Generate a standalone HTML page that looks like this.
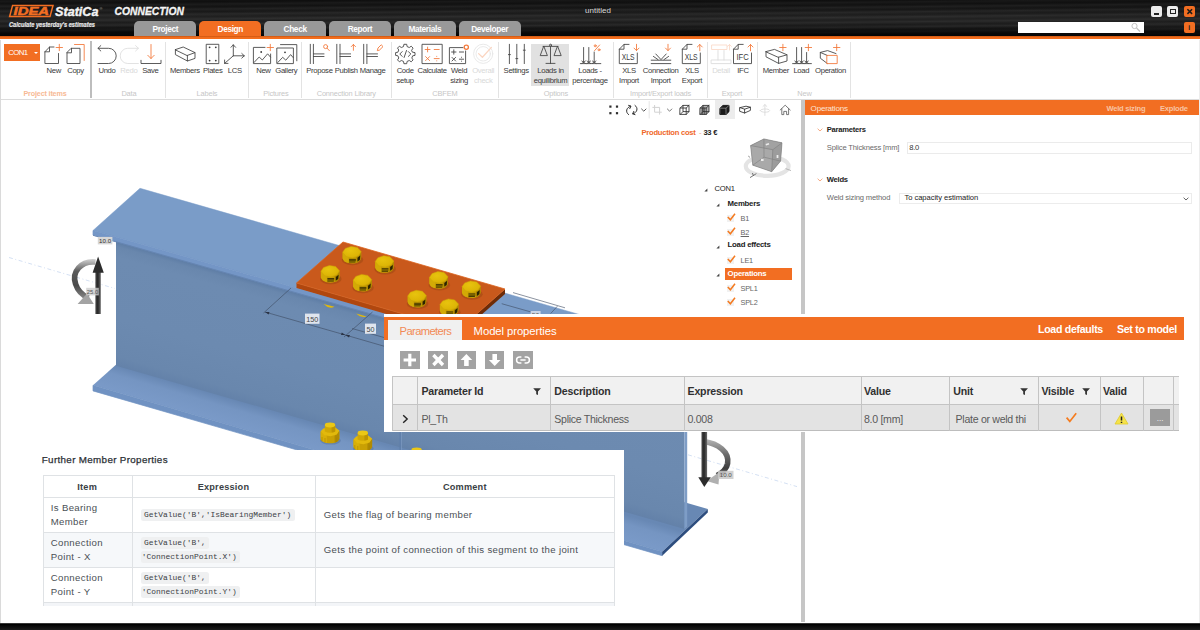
<!DOCTYPE html>
<html lang="en">
<head>
<meta charset="utf-8">
<title>IDEA StatiCa Connection - untitled</title>
<style>
*{box-sizing:border-box;margin:0;padding:0}
html,body{width:1200px;height:630px;overflow:hidden;background:#fff}
body{font-family:"Liberation Sans",sans-serif;color:#333;position:relative}
.abs{position:absolute}
#app{position:absolute;left:0;top:0;width:1200px;height:630px;overflow:hidden;background:#fff}
/* title bar */
#titlebar{position:absolute;left:0;top:0;width:1200px;height:36px;background:#1b1b1b;
 background-image:linear-gradient(180deg,rgba(0,0,0,.35) 0%,rgba(0,0,0,.05) 22%,rgba(255,255,255,.05) 50%,rgba(255,255,255,.02) 72%,rgba(0,0,0,.55) 88%,rgba(0,0,0,.85) 100%),repeating-linear-gradient(179.4deg,rgba(255,255,255,0) 0px,rgba(255,255,255,.04) 1.2px,rgba(255,255,255,0) 2.6px,rgba(0,0,0,.22) 3.8px,rgba(255,255,255,0) 5px);}
#oline{position:absolute;left:0;top:35.5px;width:1200px;height:4.2px;background:linear-gradient(180deg,#b84c0c 0,#ee6a1c 22%,#f56f1e 70%,#f9a576 92%,#fff 100%)}
.tab{position:absolute;top:21.3px;height:15.5px;width:62.2px;background:#999;border-radius:5px 5px 0 0;color:#fff;font-weight:bold;font-size:8.3px;text-align:center;line-height:16.6px;letter-spacing:-.36px}
.tab.on{background:#f26e22}
#ribbon{position:absolute;left:0;top:39px;width:1200px;height:61px;background:#fff;border-bottom:1px solid #dcdcdc}
.rl{position:absolute;top:66px;font-size:7.7px;line-height:10px;color:#3a3a3a;text-align:center;width:60px;margin-left:-30px;letter-spacing:-.32px;white-space:nowrap}
.rl.dis{color:#d9d9d9}
.gl{position:absolute;top:88.8px;font-size:7.4px;line-height:10px;color:#c6c6c6;text-align:center;width:90px;margin-left:-45px;letter-spacing:-.16px;white-space:nowrap}
.sep{position:absolute;top:41.5px;height:56px;width:1px;background:#e3e3e3}
/* bottom */
#bottombar{position:absolute;left:0;top:623.2px;width:1200px;height:6.8px;background:linear-gradient(180deg,#555 0,#000 1.4px,#0a0a0a 3px,#1d1d1d 100%)}
#viewport{position:absolute;left:0;top:100px;width:801px;height:522px;background:#fff;overflow:hidden}
#vsplit{position:absolute;left:801.2px;top:100px;width:3.8px;height:522px;background:#c6c6c6}
#rpanel{position:absolute;left:805px;top:100px;width:395px;height:522px;background:#fff}

#pp{position:absolute;left:384px;top:314px;width:800px;height:117.6px;background:#fff;overflow:hidden}
#pp .t{position:absolute;white-space:nowrap;font-size:10.4px;line-height:14px;letter-spacing:-.3px}
#pp .h{font-weight:bold;color:#303030;top:69.7px;font-size:10.6px;letter-spacing:-.18px}
#pp .c{color:#5a5a5a;top:97.5px;font-size:10.6px}
#pp .vl{position:absolute;top:61.6px;width:1px;height:55px;background:#c4c4c4}
#pp .btn{position:absolute;top:36.7px;width:19.6px;height:18px;background:#a3a3a3}

#fp{position:absolute;left:23px;top:451.3px;width:600.6px;height:160px;background:#fff;overflow:hidden}
#fp .t{position:absolute;white-space:nowrap;font-size:9.6px;line-height:14px;color:#4a4f55;letter-spacing:.36px}
#fp .hd{font-weight:bold;color:#3a3f45;text-align:center;top:28.4px;font-size:9.2px;letter-spacing:.2px}
#fp .hl{position:absolute;left:19.7px;width:571.7px;height:1px;background:#dfe2e5}
#fp .vl{position:absolute;top:24px;width:1px;height:130.4px;background:#dfe2e5}
#fp .code{position:absolute;white-space:nowrap;font-family:"Liberation Mono",monospace;font-size:7.93px;line-height:10px;color:#3c4146;background:#eff0f1;border-radius:2.5px;padding:1.2px 3.4px 0.8px 3.4px;letter-spacing:0}
</style>
</head>
<body>
<div id="app">
<div id="titlebar">
<svg class="abs" style="left:0;top:0" width="200" height="36" viewBox="0 0 200 36">
 <polygon points="12.6,5.4 53,5.4 50,16.6 9.6,16.6" fill="none" stroke="#f26e22" stroke-width="1.5"/>
 <text x="13.6" y="14.9" font-family="Liberation Sans, sans-serif" font-weight="bold" font-style="italic" font-size="10.6" fill="#f26e22" stroke="#f26e22" stroke-width="0.5" textLength="35.5" lengthAdjust="spacingAndGlyphs">IDEA</text>
 <text x="55" y="15.6" font-family="Liberation Sans, sans-serif" font-weight="bold" font-style="italic" font-size="12.6" fill="#f4f4f4" stroke="#f4f4f4" stroke-width="0.35" textLength="43.5" lengthAdjust="spacingAndGlyphs">StatiCa</text>
 <text x="99.5" y="9.5" font-family="Liberation Sans, sans-serif" font-size="4" fill="#aaa">®</text>
 <text x="114.5" y="15.2" font-family="Liberation Sans, sans-serif" font-weight="bold" font-style="italic" font-size="11" fill="#f4f4f4" stroke="#f4f4f4" stroke-width="0.3" textLength="69.5" lengthAdjust="spacingAndGlyphs">CONNECTION</text>
 <text x="9" y="27.3" font-family="Liberation Sans, sans-serif" font-weight="bold" font-style="italic" font-size="6.3" fill="#e6e6e6" stroke="#e6e6e6" stroke-width="0.2" textLength="86" lengthAdjust="spacingAndGlyphs">Calculate yesterday's estimates</text>
</svg>
<div class="tab" style="left:134.3px">Project</div>
<div class="tab on" style="left:199.2px">Design</div>
<div class="tab" style="left:264px">Check</div>
<div class="tab" style="left:328.9px">Report</div>
<div class="tab" style="left:393.7px">Materials</div>
<div class="tab" style="left:458.5px">Developer</div>
<div class="abs" style="left:568px;top:6px;width:60px;text-align:center;font-size:8px;color:#d8d8d8;line-height:10px">untitled</div>
<div class="abs" style="left:1017.5px;top:21.5px;width:126px;height:11.5px;background:#fff"></div>
<svg class="abs" style="left:1128px;top:21px" width="16" height="14" viewBox="0 0 16 14"><circle cx="6.5" cy="5" r="2.6" fill="none" stroke="#c2c2c2" stroke-width="1"/><path d="M8.5,7 L12,10.5" stroke="#c2c2c2" stroke-width="1.3"/></svg>
<div class="abs" style="left:1150.5px;top:6px;width:11.5px;height:11px;background:#ececec;border-radius:2px"></div>
<div class="abs" style="left:1153.5px;top:13px;width:5.5px;height:1.5px;background:#222"></div>
<div class="abs" style="left:1166.5px;top:6px;width:11.5px;height:11px;background:#ececec;border-radius:2px"></div>
<div class="abs" style="left:1169.5px;top:8.5px;width:6px;height:5.5px;border:1px solid #222;border-top-width:1.8px"></div>
<div class="abs" style="left:1183.5px;top:6px;width:11.5px;height:11px;background:#f26e22;border-radius:2px"></div>
<svg class="abs" style="left:1183.5px;top:6px" width="11.5" height="11" viewBox="0 0 11.5 11"><path d="M3.4,3.2 L8.1,7.9 M8.1,3.2 L3.4,7.9" stroke="#1a1a1a" stroke-width="1.5"/></svg>
<div class="abs" style="left:1183.5px;top:21.5px;width:11.5px;height:11px;background:#f26e22;border-radius:2px;color:#222;font-size:7px;font-weight:bold;text-align:center;line-height:11px">i</div>
</div>
<div id="oline"></div>
<div id="ribbon"></div>
<div class="abs" style="left:531px;top:43.7px;width:38.3px;height:42.8px;background:#e1e1e1"></div>
<div class="abs" style="left:4.2px;top:43.7px;width:35.5px;height:17.7px;background:#f26e22;color:#fff;font-size:7.8px;line-height:17.5px;padding-left:4px;letter-spacing:-.55px">CON1</div>
<div class="abs" style="left:33.5px;top:51.8px;width:0;height:0;border-left:2px solid transparent;border-right:2px solid transparent;border-top:2.4px solid #fff"></div>
<div class="abs" style="left:90px;top:41px;width:1.6px;height:57px;background:#bdbdbd"></div>
<div class="sep" style="left:165.2px"></div>
<div class="sep" style="left:248.3px"></div>
<div class="sep" style="left:301.2px"></div>
<div class="sep" style="left:390.6px"></div>
<div class="sep" style="left:498.4px"></div>
<div class="sep" style="left:612.7px"></div>
<div class="sep" style="left:706.5px"></div>
<div class="sep" style="left:756.7px"></div>
<div class="sep" style="left:849.8px"></div>
<div class="rl" style="left:53.8px">New</div>
<div class="rl" style="left:75.5px">Copy</div>
<div class="rl" style="left:107px">Undo</div>
<div class="rl dis" style="left:128.9px">Redo</div>
<div class="rl" style="left:150.4px">Save</div>
<div class="rl" style="left:184.8px">Members</div>
<div class="rl" style="left:212.7px">Plates</div>
<div class="rl" style="left:234.8px">LCS</div>
<div class="rl" style="left:263.4px">New</div>
<div class="rl" style="left:286.3px">Gallery</div>
<div class="rl" style="left:319.4px">Propose</div>
<div class="rl" style="left:346.3px">Publish</div>
<div class="rl" style="left:372.6px">Manage</div>
<div class="rl" style="left:405.2px">Code<br>setup</div>
<div class="rl" style="left:432.1px">Calculate</div>
<div class="rl" style="left:459.1px">Weld<br>sizing</div>
<div class="rl dis" style="left:483.2px">Overall<br>check</div>
<div class="rl" style="left:516.2px">Settings</div>
<div class="rl" style="left:550.5px">Loads in<br>equilibrium</div>
<div class="rl" style="left:590px">Loads -<br>percentage</div>
<div class="rl" style="left:629px">XLS<br>Import</div>
<div class="rl" style="left:660.6px">Connection<br>Import</div>
<div class="rl" style="left:692px">XLS<br>Export</div>
<div class="rl dis" style="left:721px">Detail</div>
<div class="rl" style="left:743px">IFC</div>
<div class="rl" style="left:775.9px">Member</div>
<div class="rl" style="left:801.3px">Load</div>
<div class="rl" style="left:830.5px">Operation</div>
<div class="gl" style="left:45px;color:#f7b994;font-weight:bold;font-size:7.2px">Project items</div>
<div class="gl" style="left:128.9px">Data</div>
<div class="gl" style="left:207px">Labels</div>
<div class="gl" style="left:275.9px">Pictures</div>
<div class="gl" style="left:346.3px">Connection Library</div>
<div class="gl" style="left:444.9px">CBFEM</div>
<div class="gl" style="left:555.9px">Options</div>
<div class="gl" style="left:660.6px">Import/Export loads</div>
<div class="gl" style="left:732px">Export</div>
<div class="gl" style="left:804.5px">New</div>
<svg class="abs" id="ricons" style="left:0;top:0;pointer-events:none" width="1200" height="110" viewBox="0 0 1200 110" fill="none" stroke="#464646" stroke-width="0.88" stroke-linecap="round" stroke-linejoin="round">
<!-- New -->
<path d="M54,47 H49.5 L44.9,51.8 V63.5 H58.5 V53.5 M49.5,47 V51.8 H44.9"/>
<path d="M59.3,44.3 V50.7 M56.1,47.5 H62.5" stroke="#f47a3c"/>
<!-- Copy -->
<path d="M71.5,48.3 H80 V63.5 H67 V52.8 Z M71.5,48.3 V52.8 H67"/>
<path d="M74.5,44.5 H84.2 V60.5" stroke="#f47a3c"/>
<!-- Undo -->
<path d="M98,48.3 H108.6 A7.6,7.6 0 0 1 108.6,63.5 H98 M100.8,45.6 L98,48.3 L100.8,51"/>
<!-- Redo -->
<path d="M138.4,48.3 H127.8 A7.6,7.6 0 0 0 127.8,63.5 H138.4 M135.6,45.6 L138.4,48.3 L135.6,51" stroke="#dedede"/>
<!-- Save -->
<path d="M141,60.3 V63.5 H161 V60.3"/>
<path d="M151,44.5 V58.5 M147.8,55.3 L151,58.5 L154.2,55.3" stroke="#f47a3c"/>
<!-- Members -->
<path d="M175.4,49.6 L183.2,47 L195,52.6 L187.4,55.4 Z M175.4,49.6 V54.6 L187.4,61 V55.4 M187.4,61 L195,58.4 V52.6"/>
<!-- Plates -->
<rect x="206.6" y="44.3" width="12.2" height="19.3"/>
<g fill="#3c3c3c" stroke="none"><circle cx="209.6" cy="47.3" r="0.9"/><circle cx="215.8" cy="47.3" r="0.9"/><circle cx="209.6" cy="60.6" r="0.9"/><circle cx="215.8" cy="60.6" r="0.9"/></g>
<!-- LCS -->
<path d="M233.3,55.8 V44.8 M231,47.3 L233.3,44.8 L235.6,47.3 M233.3,55.8 H244.3 M241.8,53.5 L244.3,55.8 L241.8,58.1 M233.3,55.8 L224.6,63.4 M224.6,60 V63.4 H228"/>
<!-- Picture new -->
<path d="M265,47.4 H253.4 V63.6 H270.6 V54"/>
<path d="M254,62.5 L259.2,57 L262.3,60 L267.6,53.8 L270.4,57"/>
<circle cx="261.2" cy="52" r="0.9" fill="#3c3c3c" stroke="none"/>
<path d="M270.3,44.3 V50.7 M267.1,47.5 H273.5" stroke="#f47a3c"/>
<!-- Gallery -->
<rect x="277.2" y="48" width="16.2" height="15.6"/>
<path d="M280.5,44.6 H296.8 V60.8"/>
<path d="M277.8,62.5 L282.7,57.3 L285.8,60.2 L290.6,54.6 L293.2,57.6"/>
<circle cx="285" cy="52.3" r="0.9" fill="#3c3c3c" stroke="none"/>
<!-- Propose -->
<path d="M310.3,44.3 V63.6 M313.4,44.3 V63.6 M313.4,53.9 H324 M313.4,56.5 H324"/>
<circle cx="325.6" cy="46.6" r="2" stroke="#f47a3c"/><path d="M327.2,48.3 L329.3,50.6" stroke="#f47a3c"/>
<!-- Publish -->
<path d="M336.8,44.3 V63.6 M340,44.3 V63.6 M340,53.9 H350.6 M340,56.5 H350.6"/>
<path d="M353.4,50.3 V44.5 M351.3,46.6 L353.4,44.5 L355.5,46.6" stroke="#f47a3c"/>
<!-- Manage -->
<path d="M363.7,44.3 V63.6 M366.9,44.3 V63.6 M366.9,53.9 H377.5 M366.9,56.5 H377.5"/>
<path d="M377.4,50.3 L378,48 L381.2,44.8 L383,46.6 L379.8,49.8 Z" stroke="#f47a3c" stroke-width="0.9"/>
<!-- Code setup -->
<path d="M412.7,52.2 L415.0,52.6 L415.0,55.4 L412.7,55.8 L411.8,58.0 L413.1,59.9 L411.2,61.8 L409.3,60.5 L407.1,61.4 L406.7,63.7 L403.9,63.7 L403.5,61.4 L401.3,60.5 L399.4,61.8 L397.5,59.9 L398.8,58.0 L397.9,55.8 L395.6,55.4 L395.6,52.6 L397.9,52.2 L398.8,50.0 L397.5,48.1 L399.4,46.2 L401.3,47.5 L403.5,46.6 L403.9,44.3 L406.7,44.3 L407.1,46.6 L409.3,47.5 L411.2,46.2 L413.1,48.1 L411.8,50.0Z" stroke-width="0.9"/>
<path d="M402.2,51.6 L399.8,54 L402.2,56.4 M408.4,51.6 L410.8,54 L408.4,56.4 M406.5,50.5 L404.1,57.5" stroke-width="0.9"/>
<!-- Calculate -->
<rect x="422.4" y="44.3" width="19.8" height="19.3"/>
<path d="M425.2,49.5 H430 M427.6,47.1 V51.9 M434.2,49.5 H439.2 M425.6,56.6 L429.6,60.6 M429.6,56.6 L425.6,60.6 M434.2,58.6 H439.2 M436.7,56.3 V56.4 M436.7,60.8 V60.9" stroke="#f47a3c"/>
<!-- Weld sizing -->
<path d="M463,47.6 H449.4 V63.6 H465.6 V51"/>
<path d="M451.6,52 H456 M453.8,49.8 V54.2 M459.4,52 H463.6 M452,57.4 L455.6,61 M455.6,57.4 L452,61 M459.4,59.2 H463.6 M461.5,57.2 V57.3 M461.5,61.1 V61.2" stroke-width="0.9"/>
<circle cx="466.3" cy="47.3" r="2.1" stroke="#f47a3c" stroke-width="1.3"/>
<!-- Overall check -->
<circle cx="483.2" cy="53.8" r="9.6" stroke="#e6e6e6"/><circle cx="483.2" cy="53.8" r="7.2" stroke="#e6e6e6"/>
<path d="M478.6,53.6 L482.4,57.2 L491.4,47.4" stroke="#fbd6c2" stroke-width="1.3"/>
<!-- Settings -->
<path d="M509.4,44.3 V63.6 M516.8,44.3 V63.6 M524.3,44.3 V63.6 M508.4,54.6 H510.4 M515.8,58.6 H517.8 M523.3,50.2 H525.3"/>
<!-- Loads in equilibrium -->
<path d="M550.5,45.2 V63.4 M546,63.4 H555 M543,46.4 H558 M543.6,46.4 L540.2,55.6 H547 Z M557.4,46.4 L554,55.6 H560.8 Z"/>
<circle cx="550.5" cy="45.2" r="1" fill="#e1e1e1"/>
<!-- Loads percentage -->
<path d="M583.6,47.5 V62.4 M588.8,47.5 V62.4 M594.2,52 V62.4 M580.3,63.6 H600.8"/>
<path d="M581.8,61 L585.4,63.4 M585.4,61 L581.8,63.4 M587,61 L590.6,63.4 M590.6,61 L587,63.4 M592.4,61 L596,63.4 M596,61 L592.4,63.4" stroke-width="0.8"/>
<path d="M599.6,45 L594.6,50.6" stroke="#f47a3c"/><circle cx="595.2" cy="45.8" r="1" stroke="#f47a3c" stroke-width="0.9"/><circle cx="599" cy="49.8" r="1" stroke="#f47a3c" stroke-width="0.9"/>
<!-- XLS import -->
<path d="M629,44.4 H624 L619.3,49.2 V63.6 H637.3 V53 M624,44.4 V49.2 H619.3"/>
<path d="M636.5,44.3 V50.6 M634,48.1 L636.5,50.6 L639,48.1" stroke="#f47a3c"/>
<!-- Connection import -->
<path d="M651.2,60.2 H670.8 M651.2,63.6 H670.8 M655.8,54 L661,59.6 L666.2,54 M653.4,56.4 L658,59.6 M668.6,56.4 L664,59.6" stroke-width="0.9"/>
<path d="M668,44.3 V50.6 M665.5,48.1 L668,50.6 L670.5,48.1" stroke="#f47a3c"/>
<!-- XLS export -->
<path d="M692,44.4 H687 L682.3,49.2 V63.6 H700.3 V53 M687,44.4 V49.2 H682.3"/>
<path d="M699.8,50.8 V44.5 M697.3,47 L699.8,44.5 L702.3,47" stroke="#f47a3c"/>
<!-- Detail (disabled) -->
<path d="M711.5,60 H731 V63.6 H711.5 Z M718,50.5 V60 M724,50.5 V60" stroke="#dcdcdc"/>
<path d="M712,45 H727 V49.5 H712 Z M729.5,50 V44.5 M727.6,46.4 L729.5,44.5 L731.4,46.4" stroke="#fad9c8"/>
<!-- IFC -->
<path d="M743.2,44.4 H738.2 L733.5,49.2 V63.6 H751.5 V53 M738.2,44.4 V49.2 H733.5"/>
<path d="M750.5,50.8 V44.5 M748,47 L750.5,44.5 L753,47" stroke="#f47a3c"/>
<!-- Member new -->
<path d="M766,51.6 L774.5,49.4 L787,54.8 L778.6,57.2 Z M766,51.6 V56.8 L778.6,63.4 V57.2 M778.6,63.4 L787,61 V54.8"/>
<path d="M782.9,44.3 V50.7 M779.7,47.5 H786.1" stroke="#f47a3c"/>
<!-- Load new -->
<path d="M796.6,47.5 V62.4 M801.6,47.5 V62.4 M806.6,52.5 V62.4 M792.6,63.6 H811.4"/>
<path d="M794.8,61 L798.4,63.4 M798.4,61 L794.8,63.4 M799.8,61 L803.4,63.4 M803.4,61 L799.8,63.4 M804.8,61 L808.4,63.4 M808.4,61 L804.8,63.4" stroke-width="0.8"/>
<path d="M808.4,44.3 V50.7 M805.2,47.5 H811.6" stroke="#f47a3c"/>
<!-- Operation new -->
<path d="M827.2,55.4 L820.3,52.4 L827.6,50.6 L836,53.6 M820.3,52.4 V58.2 L827.2,63.4"/>
<path d="M827.2,55.4 H837.2 V63.6 H827.2 Z" stroke="#f47a3c"/>
<path d="M836.7,44.3 V50.7 M833.5,47.5 H839.9" stroke="#f47a3c"/>
<g stroke="none" fill="#3c3c3c" font-family="Liberation Sans, sans-serif" font-size="8.6">
<text x="621.8" y="60" textLength="12.8" lengthAdjust="spacingAndGlyphs">XLS</text>
<text x="684.8" y="60" textLength="12.8" lengthAdjust="spacingAndGlyphs">XLS</text>
<text x="736.4" y="60" textLength="12.4" lengthAdjust="spacingAndGlyphs">IFC</text>
</g>
</svg>
<div id="viewport">
<svg class="abs" style="left:0;top:0" width="803" height="522" viewBox="0 100 803 522">
<defs>
<linearGradient id="gweb" gradientUnits="userSpaceOnUse" x1="116" y1="242" x2="82.6" y2="359"><stop offset="0" stop-color="#5f7ea6"/><stop offset="0.035" stop-color="#6987ad"/><stop offset="0.12" stop-color="#6d8bb1"/><stop offset="0.6" stop-color="#6c8ab0"/><stop offset="0.9" stop-color="#6987ad"/><stop offset="1" stop-color="#6280a8"/></linearGradient>
<linearGradient id="gbf" gradientUnits="userSpaceOnUse" x1="116" y1="365.7" x2="108.9" y2="390"><stop offset="0" stop-color="#6888b4"/><stop offset="0.35" stop-color="#7595c2"/><stop offset="1" stop-color="#7a9ac8"/></linearGradient>
<radialGradient id="gnut" cx="0.4" cy="0.35" r="0.75"><stop offset="0" stop-color="#e8c30e"/><stop offset="0.7" stop-color="#ddb506"/><stop offset="1" stop-color="#cca303"/></radialGradient>
<linearGradient id="gcl" gradientUnits="userSpaceOnUse" x1="0" y1="259" x2="0" y2="300"><stop offset="0" stop-color="#d2d2d2"/><stop offset="0.3" stop-color="#5a5a5a"/><stop offset="0.65" stop-color="#4a4a4a"/><stop offset="1" stop-color="#8e8e8e"/></linearGradient>
<linearGradient id="gcr" gradientUnits="userSpaceOnUse" x1="0" y1="439" x2="0" y2="478"><stop offset="0" stop-color="#b5b5b5"/><stop offset="0.4" stop-color="#6a6a6a"/><stop offset="0.75" stop-color="#3e3e3e"/><stop offset="1" stop-color="#6a6a6a"/></linearGradient>
<linearGradient id="gsh" gradientUnits="userSpaceOnUse" x1="95.4" y1="0" x2="100.8" y2="0"><stop offset="0" stop-color="#4a4a4a"/><stop offset="0.45" stop-color="#262626"/><stop offset="1" stop-color="#6a6a6a"/></linearGradient>
<linearGradient id="gsh2" gradientUnits="userSpaceOnUse" x1="701.5" y1="0" x2="707.1" y2="0"><stop offset="0" stop-color="#4a4a4a"/><stop offset="0.45" stop-color="#262626"/><stop offset="1" stop-color="#6a6a6a"/></linearGradient>
<g id="nut2">
 <ellipse cx="0.5" cy="7.6" rx="10.4" ry="4" fill="#4f6f9c" opacity=".45"/>
 <path d="M-9.3,-1.6 V6 Q-8.4,8.8 -3.2,10 Q0.6,10.8 4.6,9.8 Q9,8.4 9.3,5.6 V-2 Z" fill="#c9a004"/>
 <path d="M-9.3,-1.6 V6 Q-8.4,8.8 -3.2,10 V3 Z" fill="#d8af08"/>
 <path d="M4.6,3 V9.8 Q9,8.4 9.3,5.6 V-2 Z" fill="#b18a02"/>
 <polygon points="-9.3,-1.8 -6.6,-4.6 -0.8,-6 5.4,-5.4 9.3,-2.4 6.8,1.4 0.6,3.2 -5.6,2.2" fill="#e2b90c"/>
 <path d="M-5.2,-8 V-1.4 Q0,1 5.2,-1.4 V-8 Z" fill="#d1a806"/>
 <path d="M1.6,-0.4 Q4,-0.6 5.2,-1.4 V-8 H1.6 Z" fill="#bd9503"/>
 <ellipse cx="0" cy="-8" rx="5.2" ry="2.4" fill="#ebc716"/>
 <path d="M-8,4 V8 M-5,5 V9.4 M6.6,4.4 V9" stroke="#a88402" stroke-width="0.6"/>
</g>
<g id="bolt">
 <ellipse cx="0.6" cy="4.8" rx="10.8" ry="5.4" fill="#9a4710" opacity=".5"/>
 <path d="M-9.3,-2.6 V3.2 Q-8.6,6.6 -3.4,8.1 Q0.6,9 4.4,8 Q9,6.4 9.3,2.6 V-3 Z" fill="#c49c03"/>
 <path d="M-9.3,-2.6 V3.2 Q-8.6,6.6 -3.4,8.1 V2 Z" fill="#d3aa06"/>
 <path d="M4.6,2.2 V8 Q9,6.4 9.3,2.6 V-3 Z" fill="#ad8602"/>
 <polygon points="-9.3,-2.8 -6.6,-6.6 -0.8,-8.6 5.4,-7.6 9.3,-3.4 6.8,0.8 0.6,3 -5.6,1.6" fill="url(#gnut)" stroke="#cfa705" stroke-width="0.5"/>
 <path d="M-2.8,4.4 H4 M-2.8,5.7 H4 M-2.8,7 H3.6" stroke="#3a2f00" stroke-width="0.9"/>
 <path d="M5.6,2.8 L8.4,0.6 L8,4.8 L5.6,6.4Z" fill="#2a2200"/>
</g>
</defs>
<!-- faint axis -->
<path d="M9,257.5 L115,288.5" stroke="#cfdcf2" stroke-width="0.9" stroke-dasharray="4,2.5,1,2.5"/>
<path d="M688,454.8 L797,486.6" stroke="#cfdcf2" stroke-width="0.9" stroke-dasharray="4,2.5,1,2.5"/>
<!-- bottom flange -->
<polygon points="93.0,385.3 139.5,343.8 707.8,509.0 662.2,551.7" fill="url(#gbf)"/>
<polygon points="93.0,385.3 662.2,551.7 662.2,555.7 93.0,390.9" fill="#7092c2" stroke="#7092c2" stroke-width="0.7"/>
<polygon points="662.2,551.7 707.8,509.0 707.8,512.6 662.2,555.7" fill="#2d4d7e"/>
<!-- web -->
<polygon points="116.0,238.0 684.4,398.9 684.4,529.0 116.0,365.7" fill="url(#gweb)"/>
<polygon points="684.4,402.4 687.2,400.0 687.2,526.6 684.4,529.0" fill="#7e9dc6"/>
<path d="M400.2,300 V452" stroke="#5f7fab" stroke-width="1.6" opacity=".8"/><path d="M401.6,300 V452" stroke="#86a3cb" stroke-width="0.8" opacity=".7"/>
<!-- top flange -->
<polygon points="93.0,230.5 140.0,188.3 709.5,351.9 662.5,391.7" fill="#7a9cc8" stroke="#7a9cc8" stroke-width="0.5"/>
<polygon points="93.0,230.5 662.5,391.7 662.5,396.3 93.0,235.1" fill="#7496c6" stroke="#7496c6" stroke-width="0.7"/>
<path d="M93,235.3 L662.5,396.5" stroke="#6483b0" stroke-width="0.9"/>
<!-- dims -->
<g stroke="#3d4a60" stroke-width="0.6" fill="none">
<path d="M291,288 L263.5,313 M265,312 L345.4,335 M372.5,312 L344,337 M345.4,335 L392,348.5 M352,328.5 L400,342"/>
<path d="M513,292.6 L565,307.8 M557.4,306.2 L550.6,313.6 M501.7,303.7 L536,313.4"/>
</g>
<g fill="#2a3345"><polygon points="265,312 269.5,311.9 268.6,314.4"/><polygon points="345.4,335 341,335 341.8,332.6"/><polygon points="345.4,335 349.9,334.9 349,337.4"/></g>
<rect x="305" y="313.6" width="14.5" height="10.2" fill="#e9edf3" opacity=".92"/><text x="312.3" y="321.6" font-size="7.2" font-family="Liberation Sans, sans-serif" fill="#444" text-anchor="middle">150</text>
<rect x="365" y="323.6" width="11" height="10.2" fill="#e9edf3" opacity=".92"/><text x="370.5" y="331.6" font-size="7.2" font-family="Liberation Sans, sans-serif" fill="#444" text-anchor="middle">50</text>
<rect x="530.6" y="311" width="10" height="9" fill="#d3dcea" opacity=".9"/><text x="535.6" y="318" font-size="7" font-family="Liberation Sans, sans-serif" fill="#555" text-anchor="middle">50</text>
<!-- hidden bolt tips under top flange -->
<path d="M323.5,304 Q329,309.5 334.5,306.8 Z" fill="#e2b90a"/><path d="M356,313.5 Q361,318.5 366.5,316.4 Z" fill="#e2b90a"/>
<!-- splice plate -->
<polygon points="296.5,283.0 458.5,330.0 458.5,335.0 296.5,288.0" fill="#b0470f"/>
<polygon points="458.5,330.0 505.0,289.0 505.0,294.0 458.5,335.0" fill="#6e2c08"/>
<polygon points="343.0,242.0 505.0,289.0 458.5,330.0 296.5,283.0" fill="#c9591c" stroke="#dc631d" stroke-width="0.8"/>
<use href="#bolt" x="351.9" y="255"/>
<use href="#bolt" x="384.5" y="264.3"/>
<use href="#bolt" x="330.2" y="274.1"/>
<use href="#bolt" x="438.7" y="280.2"/>
<use href="#bolt" x="362.4" y="283"/>
<use href="#bolt" x="471.3" y="289.5"/>
<use href="#bolt" x="417" y="298.9"/>
<use href="#bolt" x="449.2" y="307.5"/>
<use href="#nut2" x="330" y="433"/>
<use href="#nut2" x="362.8" y="441"/>
<use href="#nut2" x="416.6" y="458"/>
<!-- left load arrow -->
<path d="M95.5,262 C81,260.5 71.5,272 75.6,284 C77.6,290.5 82,295 88.5,298" stroke="url(#gcl)" stroke-width="5.6" fill="none"/>
<polygon points="77.6,304 93.8,304 87,293.5" fill="#a3a3a3"/>
<rect x="95.4" y="270" width="5.4" height="44" fill="url(#gsh)"/>
<polygon points="98.1,256.6 103.8,272.8 92.6,272.8" fill="#2c2c2c"/>
<rect x="97.8" y="236.9" width="14.6" height="7.5" fill="#d6d6d6"/><text x="105.1" y="243.2" font-size="6.2" font-family="Liberation Sans, sans-serif" fill="#333" text-anchor="middle">10.0</text>
<rect x="86.2" y="287.8" width="12.6" height="7.6" fill="#cdcdcd" opacity=".8"/><text x="92.5" y="293.8" font-size="5.8" font-family="Liberation Sans, sans-serif" fill="#555" text-anchor="middle">25.0</text>
<!-- right load arrow -->
<path d="M704,441.5 C718,443.5 729.5,452 727.6,463.5 C726.6,468.5 723,472.5 717,475.5" stroke="url(#gcr)" stroke-width="5.6" fill="none"/>
<polygon points="706.6,481 719.5,472 718.5,484.5" fill="#b0b0b0"/>
<rect x="701.5" y="431" width="5.6" height="47.5" fill="url(#gsh2)"/>
<polygon points="704.3,487 710.8,477.2 698.3,477.2" fill="#2c2c2c"/>
<rect x="718" y="470.8" width="15.5" height="8.2" fill="#c9c9c9" opacity=".85"/><text x="725.8" y="477.4" font-size="6.2" font-family="Liberation Sans, sans-serif" fill="#555" text-anchor="middle">10.0</text>
</svg>
<!-- viewport toolbar -->
<div class="abs" style="left:714.6px;top:0px;width:20.2px;height:19px;background:#ececec"></div>
<svg class="abs" style="left:600px;top:0" width="203" height="22" viewBox="600 100 203 22" fill="none" stroke="#2e2e2e" stroke-width="1" stroke-linecap="round" stroke-linejoin="round">
<g fill="#2e2e2e" stroke="none"><rect x="609.3" y="105.5" width="2.2" height="2.2"/><rect x="615.9" y="105.5" width="2.2" height="2.2"/><rect x="609.3" y="112.1" width="2.2" height="2.2"/><rect x="615.9" y="112.1" width="2.2" height="2.2"/></g>
<path d="M630.6,106.2 C626.4,107.4 625,112 628.6,114.6 M633,113.8 C637.2,112.6 638.6,108 635,105.4 M628.6,105.4 L631,106.2 L629.8,108.6 M635,114.6 L632.6,113.8 L633.8,111.4" stroke-width="1"/>
<path d="M641.6,109 L643.8,111.2 L646,109" stroke="#555"/>
<path d="M649.2,101.5 V118" stroke="#e6e6e6"/>
<path d="M654.6,105.4 V112.2 H661.4 M652.8,107.4 H659.6 V114.2" stroke="#d2d2d2"/>
<path d="M667.4,109 L669.6,111.2 L671.8,109" stroke="#777"/>
<path d="M680.2,108 L683,105.4 H689 V111.6 L686.2,114.4 H680.2 Z M680.2,108 H686.2 V114.4 M686.2,108 L689,105.4 M683,105.4 V111.6 H689 M683,111.6 L680.2,114.4" stroke-width="0.85"/>
<path d="M700.2,108 L703,105.4 H709 V111.6 L706.2,114.4 H700.2 Z" fill="#b5b5b5" stroke="none"/><path d="M700.2,108 L703,105.4 H709 V111.6 L706.2,114.4 H700.2 Z M700.2,108 H706.2 V114.4 M706.2,108 L709,105.4 M703,105.4 V111.6 H709 M703,111.6 L700.2,114.4 M702.2,108 V114.4 M704.2,108 V114.4" stroke-width="0.85"/>
<path d="M720.2,108 L723,105.4 H729 V111.6 L726.2,114.4 H720.2 Z" fill="#1a1a1a" stroke="#1a1a1a"/>
<path d="M720.6,108.2 H726 V114 M726,108.2 L728.6,105.8" stroke="#9a9a9a" stroke-width="0.7"/>
<path d="M740,107.6 L746,106.2 L750.4,107.2 V110.4 L744.6,113 L740,111.4 Z M740,107.6 L744.6,109.2 V113 M744.6,109.2 L750.4,107.2" stroke-width="0.85"/>
<path d="M764.9,104.6 V115.4 M760.2,110.6 C760.2,108.4 769.6,108.4 769.6,110.6 C769.6,112.8 760.2,112.8 760.2,110.6 M763,106.4 L764.9,104.6 L766.8,106.4" stroke="#dadada" stroke-width="0.9"/>
<path d="M780.2,110 L785.2,105.2 L790.2,110 M781.8,108.8 V114.6 H783.8 V111.4 H786.6 V114.6 H788.6 V108.8" stroke-width="0.8" stroke="#555"/>
</svg>
<div class="abs" style="left:641.5px;top:28px;font-size:7.6px;line-height:10px;font-weight:bold;color:#f0692a;letter-spacing:-.25px;white-space:nowrap">Production cost <span style="color:#f3a27a;font-weight:normal;padding:0 2.2px 0 1.5px">-</span><span style="color:#222">33 €</span></div>
<!-- nav cube -->
<svg class="abs" style="left:738px;top:34px" width="62" height="50" viewBox="738 134 62 50">
<ellipse cx="767.2" cy="166.2" rx="21.4" ry="9.6" fill="none" stroke="#e4e4e4" stroke-width="4.2"/>
<polygon points="750.6,145.6 763.9,138.9 782,142.8 780.6,161.1 771.7,171.7 752.8,165.2" fill="#a4a4a4"/>
<polygon points="750.6,145.6 772.8,149.7 771.7,171.7 752.8,165.2" fill="#a9a9a9"/>
<polygon points="772.8,149.7 782,142.8 780.6,161.1 771.7,171.7" fill="#9c9c9c"/>
<polygon points="750.6,145.6 763.9,138.9 782,142.8 772.8,149.7" fill="#a2a2a2"/>
<path d="M750.6,145.6 L763.9,138.9 L782,142.8 L780.6,161.1 L771.7,171.7 L752.8,165.2 Z M750.6,145.6 L772.8,149.7 L782,142.8 M772.8,149.7 L771.7,171.7 M763.9,138.9 L764,157.2 L752.8,165.2 M764,157.2 L780.6,161.1" stroke="#7e7e7e" stroke-width="0.6" fill="none"/>
<path d="M750,177.6 L756.4,173.6 M752.4,173 L753.6,176" stroke="#666" stroke-width="0.9"/>
<path d="M785.6,168.6 L791,170.6" stroke="#aaa" stroke-width="0.8"/>
<path d="M748.2,156 L750,157.4" stroke="#777" stroke-width="0.8"/>
<g fill="#ececec"><rect x="765.6" y="143.6" width="3.4" height="1.6" transform="rotate(-18 767 144)"/><rect x="761" y="158.8" width="2.6" height="2.2"/><rect x="776.6" y="155" width="1.8" height="3"/></g>
</svg>
<svg class="abs" style="left:703.5px;top:88px" width="4" height="4" viewBox="0 0 4 4"><polygon points="3.4,0.4 3.4,3.4 0.4,3.4" fill="#444"/></svg>
<div style="position:absolute;font-size:7.6px;line-height:10px;letter-spacing:-.25px;white-space:nowrap;left:714.6px;top:83.80000000000001px;color:#222">CON1</div>
<svg class="abs" style="left:716px;top:102.5px" width="4" height="4" viewBox="0 0 4 4"><polygon points="3.4,0.4 3.4,3.4 0.4,3.4" fill="#444"/></svg>
<div style="position:absolute;font-size:7.8px;line-height:10px;letter-spacing:-.25px;white-space:nowrap;left:727.6px;top:98.5px;color:#222;font-weight:bold">Members</div>
<div class="abs" style="left:727.2px;top:114.6px;width:7px;height:7px;background:#f1f1f1"></div><svg class="abs" style="left:727.2px;top:113.4px" width="8.6" height="8" viewBox="0 0 8.6 8"><path d="M0.8,3.9 L3.4,6.8 L8,0.8" stroke="#f47a20" stroke-width="1.5" fill="none"/></svg>
<div style="position:absolute;font-size:7.3px;line-height:10px;letter-spacing:-.25px;white-space:nowrap;left:740.6px;top:114.0px;color:#666">B1</div>
<div class="abs" style="left:727.2px;top:128.6px;width:7px;height:7px;background:#f1f1f1"></div><svg class="abs" style="left:727.2px;top:127.4px" width="8.6" height="8" viewBox="0 0 8.6 8"><path d="M0.8,3.9 L3.4,6.8 L8,0.8" stroke="#f47a20" stroke-width="1.5" fill="none"/></svg>
<div style="position:absolute;font-size:7.3px;line-height:10px;letter-spacing:-.25px;white-space:nowrap;left:740.6px;top:128.1px;color:#666;text-decoration:underline">B2</div>
<svg class="abs" style="left:716px;top:144.5px" width="4" height="4" viewBox="0 0 4 4"><polygon points="3.4,0.4 3.4,3.4 0.4,3.4" fill="#444"/></svg>
<div style="position:absolute;font-size:7.8px;line-height:10px;letter-spacing:-.25px;white-space:nowrap;left:727.6px;top:140.4px;color:#222;font-weight:bold">Load effects</div>
<div class="abs" style="left:727.2px;top:156.6px;width:7px;height:7px;background:#f1f1f1"></div><svg class="abs" style="left:727.2px;top:155.4px" width="8.6" height="8" viewBox="0 0 8.6 8"><path d="M0.8,3.9 L3.4,6.8 L8,0.8" stroke="#f47a20" stroke-width="1.5" fill="none"/></svg>
<div style="position:absolute;font-size:7.3px;line-height:10px;letter-spacing:-.25px;white-space:nowrap;left:740.6px;top:155.9px;color:#666">LE1</div>
<div class="abs" style="left:724.6px;top:167.8px;width:67.3px;height:12.2px;background:#f26e22"></div>
<svg class="abs" style="left:716px;top:173px" width="4" height="4" viewBox="0 0 4 4"><polygon points="3.4,0.4 3.4,3.4 0.4,3.4" fill="#444"/></svg>
<div style="position:absolute;font-size:7.8px;line-height:10px;letter-spacing:-.25px;white-space:nowrap;left:727.6px;top:169.2px;color:#fff;font-weight:bold">Operations</div>
<div class="abs" style="left:727.2px;top:184.6px;width:7px;height:7px;background:#f1f1f1"></div><svg class="abs" style="left:727.2px;top:183.4px" width="8.6" height="8" viewBox="0 0 8.6 8"><path d="M0.8,3.9 L3.4,6.8 L8,0.8" stroke="#f47a20" stroke-width="1.5" fill="none"/></svg>
<div style="position:absolute;font-size:7.3px;line-height:10px;letter-spacing:-.25px;white-space:nowrap;left:740.6px;top:183.6px;color:#666">SPL1</div>
<div class="abs" style="left:727.2px;top:198.6px;width:7px;height:7px;background:#f1f1f1"></div><svg class="abs" style="left:727.2px;top:197.4px" width="8.6" height="8" viewBox="0 0 8.6 8"><path d="M0.8,3.9 L3.4,6.8 L8,0.8" stroke="#f47a20" stroke-width="1.5" fill="none"/></svg>
<div style="position:absolute;font-size:7.3px;line-height:10px;letter-spacing:-.25px;white-space:nowrap;left:740.6px;top:198.1px;color:#666">SPL2</div>
</div>
<div id="vsplit"></div>
<div id="rpanel">
<div class="abs" style="left:0;top:0.2px;width:395px;height:14.8px;background:#f26e22"></div>
<div style="position:absolute;font-size:7.6px;line-height:10px;letter-spacing:-.25px;white-space:nowrap;left:5.6px;top:3.6px;color:#fde3d3;font-size:8.1px">Operations</div>
<div style="position:absolute;font-size:7.6px;line-height:10px;letter-spacing:-.25px;white-space:nowrap;left:301.4px;top:3.6px;color:#f9c3a3;font-weight:bold">Weld sizing</div>
<div style="position:absolute;font-size:7.6px;line-height:10px;letter-spacing:-.25px;white-space:nowrap;left:355px;top:3.6px;color:#f9c3a3;font-weight:bold">Explode</div>
<svg class="abs" style="left:11.5px;top:27.5px" width="6" height="4" viewBox="0 0 6 4"><path d="M0.6,0.7 L3,3 L5.4,0.7" stroke="#f4a177" stroke-width="0.9" fill="none"/></svg>
<div style="position:absolute;font-size:7.6px;line-height:10px;letter-spacing:-.25px;white-space:nowrap;left:21.8px;top:24.5px;color:#222;font-weight:bold">Parameters</div>
<div style="position:absolute;font-size:7.6px;line-height:10px;letter-spacing:-.16px;white-space:nowrap;left:21.8px;top:43px;color:#6a6a6a">Splice Thickness [mm]</div>
<div class="abs" style="left:101.6px;top:41.6px;width:285.6px;height:12px;border:1px solid #ebebeb;background:#fff"></div>
<div style="position:absolute;font-size:7.6px;line-height:10px;letter-spacing:-.25px;white-space:nowrap;left:104.2px;top:43px;color:#333">8.0</div>
<svg class="abs" style="left:11.5px;top:77.8px" width="6" height="4" viewBox="0 0 6 4"><path d="M0.6,0.7 L3,3 L5.4,0.7" stroke="#f4a177" stroke-width="0.9" fill="none"/></svg>
<div style="position:absolute;font-size:7.6px;line-height:10px;letter-spacing:-.25px;white-space:nowrap;left:21.8px;top:74.8px;color:#222;font-weight:bold">Welds</div>
<div style="position:absolute;font-size:7.6px;line-height:10px;letter-spacing:-.15px;white-space:nowrap;left:21.8px;top:93.2px;color:#6a6a6a">Weld sizing method</div>
<div class="abs" style="left:94.4px;top:92.6px;width:292.8px;height:11.4px;border:1px solid #ececec;background:#fff"></div>
<div style="position:absolute;font-size:7.6px;line-height:10px;letter-spacing:-.04px;white-space:nowrap;left:99.4px;top:93.2px;color:#222">To capacity estimation</div>
<svg class="abs" style="left:378.4px;top:96.6px" width="6" height="4" viewBox="0 0 6 4"><path d="M0.6,0.7 L3,3 L5.4,0.7" stroke="#555" stroke-width="0.9" fill="none"/></svg>
</div>
<div id="pp">
<div class="abs" style="left:0;top:2.8px;width:800px;height:23.2px;background:#f26e22"></div>
<div class="abs" style="left:3.9px;top:6.4px;width:74.3px;height:19.6px;background:#f0f0f0"></div>
<div class="t" style="left:15.6px;top:9.8px;font-size:11.2px;color:#f28a55;letter-spacing:-.62px">Parameters</div>
<div class="t" style="left:89.6px;top:9.8px;font-size:11.3px;color:#fff;letter-spacing:-.08px">Model properties</div>
<div class="t" style="left:654px;top:7.6px;font-weight:bold;color:#fff;font-size:10.6px">Load defaults</div>
<div class="t" style="left:733px;top:7.6px;font-weight:bold;color:#fff;font-size:10.6px">Set to model</div>
<div class="btn" style="left:16.0px"></div>
<div class="btn" style="left:44.3px"></div>
<div class="btn" style="left:72.6px"></div>
<div class="btn" style="left:100.9px"></div>
<div class="btn" style="left:129.2px"></div>
<svg class="abs" style="left:16px;top:36.7px" width="140" height="18" viewBox="0 0 140 18" fill="none" stroke="#fff">
<path d="M9.8,2.8 V15.2 M3.6,9 H16" stroke-width="3.2"/>
<path d="M33.4,4 L43,14 M43,4 L33.4,14" stroke-width="3.3"/>
<polygon points="66.4,3 72.2,9 68.7,9 68.7,15 64.1,15 64.1,9 60.6,9" fill="#fff" stroke="none"/>
<polygon points="94.7,15 100.5,9 97,9 97,3 92.4,3 92.4,9 88.9,9" fill="#fff" stroke="none"/>
<path d="M121.4,6 H119.6 A3,3 0 0 0 119.6,12 H121.4 M124.6,6 H126.4 A3,3 0 0 1 126.4,12 H124.6 M120.4,9 H125.6" stroke-width="1.5"/>
</svg>
<div class="abs" style="left:7.7px;top:61.6px;width:787px;height:29.2px;background:#f1f1f1;border-top:1px solid #c4c4c4;border-bottom:1px solid #c4c4c4"></div>
<div class="abs" style="left:7.7px;top:90.8px;width:787px;height:25.8px;background:#e3e3e3;border-bottom:1.4px solid #bdbdbd"></div>
<div class="vl" style="left:7.7px"></div>
<div class="vl" style="left:33.4px"></div>
<div class="vl" style="left:166.3px"></div>
<div class="vl" style="left:299.6px"></div>
<div class="vl" style="left:476.5px"></div>
<div class="vl" style="left:564.7px"></div>
<div class="vl" style="left:653.6px"></div>
<div class="vl" style="left:715.5px"></div>
<div class="vl" style="left:758.6px"></div>
<div class="vl" style="left:789.4px"></div>
<div class="t h" style="left:37.4px">Parameter Id</div>
<div class="t h" style="left:170.3px">Description</div>
<div class="t h" style="left:303.5px">Expression</div>
<div class="t h" style="left:480.0px">Value</div>
<div class="t h" style="left:569.3px">Unit</div>
<div class="t h" style="left:657.4px">Visible</div>
<div class="t h" style="left:719.0px">Valid</div>
<svg class="abs" style="left:149.00000000000003px;top:73.8px" width="8.2" height="7.8" viewBox="0 0 7.4 7"><path d="M0.2,0.3 H7.2 L4.5,3.2 V6.4 L2.9,5.6 V3.2 Z" fill="#333"/></svg>
<svg class="abs" style="left:635.8px;top:73.8px" width="8.2" height="7.8" viewBox="0 0 7.4 7"><path d="M0.2,0.3 H7.2 L4.5,3.2 V6.4 L2.9,5.6 V3.2 Z" fill="#333"/></svg>
<svg class="abs" style="left:698.1999999999999px;top:73.8px" width="8.2" height="7.8" viewBox="0 0 7.4 7"><path d="M0.2,0.3 H7.2 L4.5,3.2 V6.4 L2.9,5.6 V3.2 Z" fill="#333"/></svg>
<div class="t c" style="left:37.4px">Pl_Th</div>
<div class="t c" style="left:170.3px">Splice Thickness</div>
<div class="t c" style="left:303.5px">0.008</div>
<div class="t c" style="left:480.0px">8.0 [mm]</div>
<div class="t c" style="left:571.6px">Plate or weld thi</div>
<svg class="abs" style="left:17.6px;top:100px" width="7" height="10" viewBox="0 0 7 10"><path d="M1.2,1.2 L5.2,5 L1.2,8.8" stroke="#222" stroke-width="1.4" fill="none"/></svg>
<svg class="abs" style="left:680.5px;top:97.5px" width="13" height="11" viewBox="0 0 13 11"><path d="M1.6,5.6 L4.8,9.4 L11.2,1.2" stroke="#f57c1f" stroke-width="1.7" fill="none"/></svg>
<svg class="abs" style="left:729.5px;top:97.6px" width="15" height="13" viewBox="0 0 15 13"><path d="M7.5,1 L14,12 H1 Z" fill="#f6e34a" stroke="#e0cb2c" stroke-width="0.8"/><path d="M7.5,4.4 V8.6 M7.5,9.8 V11" stroke="#222" stroke-width="1.5"/></svg>
<div class="abs" style="left:766.3px;top:94.5px;width:19.7px;height:17.5px;background:#9b9b9b;color:#fff;font-size:8px;line-height:20px;text-align:center">...</div>
</div>
<div class="abs" style="left:23px;top:450.3px;width:600.6px;height:2px;background:#fff"></div>
<div id="fp">
<div class="t" style="left:18.8px;top:2.2px;color:#2b3035;font-size:9.8px;letter-spacing:.34px;-webkit-text-stroke:.25px #2b3035">Further Member Properties</div>
<div class="abs" style="left:19.7px;top:80.6px;width:571.7px;height:35.2px;background:#f6f8fa"></div>
<div class="abs" style="left:19.7px;top:151px;width:571.7px;height:3.4px;background:#f3f5f8"></div>
<div class="hl" style="top:24px"></div>
<div class="hl" style="top:45.4px"></div>
<div class="hl" style="top:80.6px"></div>
<div class="hl" style="top:115.7px"></div>
<div class="hl" style="top:151px"></div>
<div class="vl" style="left:19.7px"></div>
<div class="vl" style="left:108.7px"></div>
<div class="vl" style="left:292.2px"></div>
<div class="vl" style="left:591.4px"></div>
<div class="t hd" style="left:19.7px;width:89px">Item</div>
<div class="t hd" style="left:108.7px;width:183.5px">Expression</div>
<div class="t hd" style="left:292.2px;width:299.2px">Comment</div>
<div class="t" style="left:27.7px;top:49.6px;line-height:13.8px">Is Bearing<br>Member</div>
<div class="code" style="left:117.6px;top:57.9px">GetValue('B','IsBearingMember')</div>
<div class="t" style="left:300.7px;top:56.4px">Gets the flag of bearing member</div>
<div class="t" style="left:27.7px;top:84.8px;line-height:13.8px">Connection<br>Point - X</div>
<div class="code" style="left:117.6px;top:85.8px">GetValue('B',</div><div class="code" style="left:117.6px;top:99.6px;padding-left:1.2px">'ConnectionPoint.X')</div>
<div class="t" style="left:300.7px;top:91.3px">Gets the point of connection of this segment to the joint</div>
<div class="t" style="left:27.7px;top:120px;line-height:13.8px">Connection<br>Point - Y</div>
<div class="code" style="left:117.6px;top:121px">GetValue('B',</div><div class="code" style="left:117.6px;top:134.8px;padding-left:1.2px">'ConnectionPoint.Y')</div>
</div>
<div class="abs" style="left:0;top:39.5px;width:1.1px;height:584px;background:#dadada"></div>
<div class="abs" style="left:1199.2px;top:39.5px;width:.8px;height:584px;background:#ededed"></div>
<div id="bottombar"></div>
</div>
</body>
</html>
